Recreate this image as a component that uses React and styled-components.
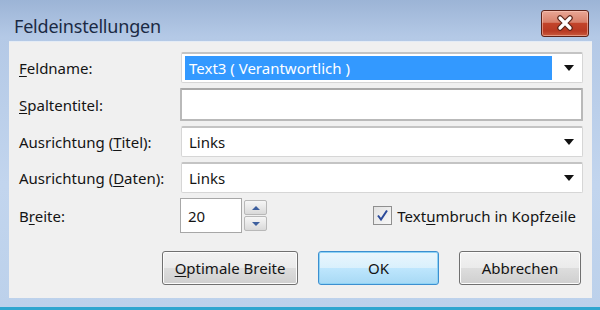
import styled, { createGlobalStyle, css } from "styled-components";

const GlobalStyle = createGlobalStyle`
  html, body {
    margin: 0;
    padding: 0;
    background: #ffffff;
  }
  body {
    font-family: "Noto Sans", "Open Sans", sans-serif;
  }
`;

const Window = styled.div`
  width: 600px;
  height: 310px;
  box-sizing: border-box;
  display: flex;
  flex-direction: column;
  padding: 0 8px 9px 9px;
  background: linear-gradient(180deg, #9cb4d6 0%, #b4c9e6 12%, #c2d5ee 60%, #bcd1eb 100%);
  border-bottom: 3px solid #2fa6cf;
`;

const TitleBar = styled.div`
  height: 41px;
  display: flex;
  align-items: center;
  justify-content: space-between;
  margin-left: -9px;
  margin-right: -8px;
  padding: 0 11px 0 14px;
  box-sizing: border-box;
`;

const Title = styled.div`
  font-size: 18px;
  color: #1b2a44;
  padding-top: 10px;
  letter-spacing: -0.2px;
`;

const CloseButton = styled.div`
  width: 48px;
  height: 27px;
  box-sizing: border-box;
  margin-top: 5px;
  border: 1px solid #5d2218;
  border-radius: 3px;
  background: linear-gradient(180deg, #e9a796 0%, #d8806a 45%, #c2442a 50%, #b83a23 80%, #c95a3e 100%);
  box-shadow: inset 0 0 0 1px rgba(255, 210, 195, 0.5);
  display: flex;
  align-items: center;
  justify-content: center;
`;

const Client = styled.div`
  flex: 1;
  background: #f0f0f0;
  border-top: 1px solid #e4ecf6;
  padding: 10px 9px 0 10px;
  display: flex;
  flex-direction: column;
`;

const Form = styled.div`
  display: grid;
  grid-template-columns: 161px 1fr;
  grid-template-rows: 31px 33px 31px 31px 35px;
  row-gap: 5px;
  align-items: center;
`;

const underline = css`
  u {
    text-decoration-thickness: 1px;
    text-underline-offset: 2px;
  }
`;

const Label = styled.label`
  font-size: 15px;
  color: #141414;
  ${underline};
`;

const boxBase = css`
  height: 100%;
  box-sizing: border-box;
  background: #ffffff;
  display: flex;
  align-items: center;
  font-size: 15px;
  color: #141414;
`;

const Combo = styled.div`
  ${boxBase};
  border: 1px solid #d6d6d6;
  border-top: 2px solid #c4c4c4;
  border-radius: 2px;
  padding: 2px 8px 2px 3px;
  margin-left: 1px;
`;

const ComboValue = styled.div`
  flex: 1;
  height: 100%;
  display: flex;
  align-items: center;
  padding-left: 4px;
  margin-right: 12px;
  background: ${(p) => (p.selected ? "#3399ff" : "transparent")};
  color: ${(p) => (p.selected ? "#ffffff" : "#141414")};
`;

const Arrow = styled.div`
  width: 0;
  height: 0;
  border-left: 5px solid transparent;
  border-right: 5px solid transparent;
  border-top: 6px solid #111111;
`;

const TextBox = styled.div`
  ${boxBase};
  border: 2px solid #b9b9b9;
  border-top-color: #a9a9a9;
  border-radius: 1px;
`;

const BottomRow = styled.div`
  height: 100%;
  display: flex;
  align-items: center;
`;

const Spin = styled.div`
  display: flex;
  align-items: center;
  gap: 2px;
  height: 100%;
`;

const SpinInput = styled.div`
  ${boxBase};
  width: 62px;
  border: 1px solid #a7a7a7;
  padding-left: 7px;
`;

const SpinButtons = styled.div`
  display: flex;
  flex-direction: column;
  gap: 1px;
`;

const SpinButton = styled.div`
  width: 23px;
  height: 15px;
  box-sizing: border-box;
  border: 1px solid #b8b8b8;
  border-radius: 2px;
  background: linear-gradient(180deg, #f6f6f6 0%, #e8e8e8 50%, #d9d9d9 100%);
  display: flex;
  align-items: center;
  justify-content: center;
`;

const SpinArrow = styled.div`
  width: 0;
  height: 0;
  border-left: 4px solid transparent;
  border-right: 4px solid transparent;
  ${(p) =>
    p.up
      ? "border-bottom: 4px solid #3d5f9e;"
      : "border-top: 4px solid #3d5f9e;"}
`;

const CheckLabel = styled.label`
  margin-left: auto;
  margin-right: 7px;
  display: flex;
  align-items: center;
  gap: 5px;
  font-size: 15px;
  color: #141414;
  ${underline};
`;

const CheckBox = styled.div`
  width: 19px;
  height: 19px;
  box-sizing: border-box;
  border: 1px solid #8f8f8f;
  background: linear-gradient(135deg, #e2e2e2 0%, #f7f7f7 100%);
  display: flex;
  align-items: center;
  justify-content: center;
`;

const Buttons = styled.div`
  display: flex;
  justify-content: flex-end;
  gap: 20px;
  margin-top: 18px;
  padding-right: 2px;
`;

const Button = styled.div`
  width: ${(p) => p.w}px;
  height: 34px;
  box-sizing: border-box;
  border-radius: 3px;
  display: flex;
  align-items: center;
  justify-content: center;
  font-size: 15px;
  color: #141414;
  border: 1px solid ${(p) => (p.primary ? "#3c8fd0" : "#707070")};
  background: ${(p) =>
    p.primary
      ? "linear-gradient(180deg, #eaf6fd 0%, #d9f0fc 50%, #bee6fd 51%, #a7d9f5 100%)"
      : "linear-gradient(180deg, #f2f2f2 0%, #ebebeb 50%, #dddddd 51%, #cfcfcf 100%)"};
  box-shadow: inset 0 0 0 1px ${(p) => (p.primary ? "#8fd3f5" : "#fcfcfc")};
  ${underline};
`;

export default function App() {
  return (
    <>
      <GlobalStyle />
      <Window>
        <TitleBar>
          <Title>Feldeinstellungen</Title>
          <CloseButton>
            <svg width="20" height="16" viewBox="0 0 20 16">
              <path
                d="M5 3 L15 13 M15 3 L5 13"
                stroke="#5a2418"
                strokeWidth="5.5"
                strokeLinecap="round"
              />
              <path
                d="M5 3 L15 13 M15 3 L5 13"
                stroke="#ffffff"
                strokeWidth="3.2"
                strokeLinecap="round"
              />
            </svg>
          </CloseButton>
        </TitleBar>
        <Client>
          <Form>
            <Label>
              <u>F</u>eldname:
            </Label>
            <Combo>
              <ComboValue selected>Text3 ( Verantwortlich )</ComboValue>
              <Arrow />
            </Combo>

            <Label>
              <u>S</u>paltentitel:
            </Label>
            <TextBox />

            <Label>
              Ausrichtung (<u>T</u>itel):
            </Label>
            <Combo>
              <ComboValue>Links</ComboValue>
              <Arrow />
            </Combo>

            <Label>
              Ausrichtung (<u>D</u>aten):
            </Label>
            <Combo>
              <ComboValue>Links</ComboValue>
              <Arrow />
            </Combo>

            <Label>
              B<u>r</u>eite:
            </Label>
            <BottomRow>
              <Spin>
                <SpinInput>20</SpinInput>
                <SpinButtons>
                  <SpinButton>
                    <SpinArrow up />
                  </SpinButton>
                  <SpinButton>
                    <SpinArrow />
                  </SpinButton>
                </SpinButtons>
              </Spin>
              <CheckLabel>
                <CheckBox>
                  <svg width="13" height="13" viewBox="0 0 13 13">
                    <path
                      d="M2 6.5 L5 10.5 L11 1.5"
                      fill="none"
                      stroke="#2b4a9a"
                      strokeWidth="2"
                    />
                  </svg>
                </CheckBox>
                <span>
                  Text<u>u</u>mbruch in Kopfzeile
                </span>
              </CheckLabel>
            </BottomRow>
          </Form>
          <Buttons>
            <Button w={136}>
              <span>
                <u>O</u>ptimale Breite
              </span>
            </Button>
            <Button w={121} primary>
              OK
            </Button>
            <Button w={122}>Abbrechen</Button>
          </Buttons>
        </Client>
      </Window>
    </>
  );
}
